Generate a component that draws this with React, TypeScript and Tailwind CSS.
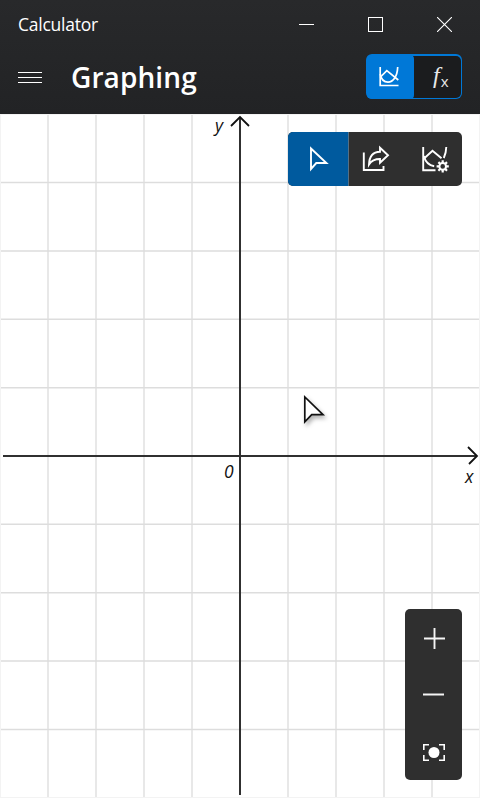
import React from "react";

const verticals = [48, 96, 144, 192, 288, 336, 384, 432];
const horizontals = [-4, -3, -2, -1, 1, 2, 3, 4].map((k) => 342 + k * 68.35);

function TitleBar() {
  return (
    <div className="flex h-[48px] items-center justify-between pl-[18px]">
      <span className="text-[17.5px] leading-6 tracking-[-0.25px]">Calculator</span>
      <div className="flex h-full items-center">
        <button aria-label="Minimize" className="flex h-full w-[69px] items-center justify-center">
          <span className="h-px w-[15px] bg-white" />
        </button>
        <button aria-label="Maximize" className="flex h-full w-[69px] items-center justify-center">
          <span className="h-[15px] w-[15px] border border-white" />
        </button>
        <button aria-label="Close" className="flex h-full w-[70px] items-center justify-center pr-[2px]">
          <svg width="15" height="15" viewBox="0 0 15 15" stroke="white" strokeWidth="1.1">
            <path d="M0 0L15 15M15 0L0 15" />
          </svg>
        </button>
      </div>
    </div>
  );
}

function ModeSwitch() {
  return (
    <div className="flex h-[45px] w-[96px] overflow-hidden rounded-[6px] bg-[#0078d7] p-[1.5px]">
      <div className="flex flex-1 rounded-[5px] bg-[#1b1c1e]">
        <button aria-label="Graph view" className="-my-px -ml-px flex w-[47.5px] items-center justify-center rounded-[4px] bg-[#0078d7] pr-[2px]">
          <svg width="20" height="20" viewBox="0 0 20 20" fill="none" stroke="white" strokeWidth="1.7">
            <path d="M1.2 0V18.5H19.5" />
            <path d="M1 10.5L7.8 3.6L19.3 13" />
            <path d="M1.2 7C2 11.5 4.5 15.2 9 15.2C14 15.2 18.3 10 18.7 0" />
          </svg>
        </button>
        <button aria-label="Equation view" className="flex flex-1 items-baseline justify-center pt-[5px] pl-[6px] text-[#e8e8e8]">
          <span className="font-['Liberation_Serif',serif] text-[24px] leading-7 italic">f</span>
          <span className="relative top-[4px] left-px text-[15px] leading-4">x</span>
        </button>
      </div>
    </div>
  );
}

function Toolbar() {
  return (
    <div className="absolute top-[18px] right-[18px] flex h-[54px] w-[174px] overflow-hidden rounded-[5px] bg-[#2f2f2f]">
      <button aria-label="Trace" className="flex w-[60px] items-center justify-center bg-[#005a9e] pl-[2px]">
        <svg width="20" height="28" viewBox="0 0 20 28" fill="none" stroke="white" strokeWidth="1.9">
          <path d="M2 3.5V24L7.3 18H17.4Z" />
        </svg>
      </button>
      <button aria-label="Share" className="flex w-[57px] items-center justify-center border-l border-[#557085] pr-[3px]">
        <svg width="28" height="28" viewBox="0 0 28 28" fill="none" stroke="white" strokeWidth="1.9">
          <path d="M1.8 7.5V25H21.5V21" />
          <path d="M18 2.8L26 10.3L18 17.8V14C13 14 9.5 15.5 7 19.5C7.3 12 11 7 18 6.8Z" />
        </svg>
      </button>
      <button aria-label="Graph options" className="flex w-[57px] items-center justify-center pl-[2px]">
        <svg width="28" height="28" viewBox="0 0 28 28" fill="none" stroke="white" strokeWidth="1.9">
          <path d="M2.2 2V25.2H14.5" />
          <path d="M2.5 14L11.5 5.7L20.5 13.2" />
          <path d="M25.3 2C25.2 6 24.4 9.5 22.8 13" />
          <path d="M2.8 11C4.5 17 8 20.5 13.2 21.3" />
          <circle cx="21.7" cy="21.4" r="3.3" strokeWidth="2" />
          <path strokeWidth="2.2" d="M21.7 15.3V18M21.7 24.8V27.5M15.6 21.4H18.3M25.1 21.4H27.8M17.4 17.1L19.3 19M24.1 23.8L26 25.7M17.4 25.7L19.3 23.8M24.1 19L26 17.1" />
        </svg>
      </button>
    </div>
  );
}

function ZoomControls() {
  return (
    <div className="absolute right-[18px] bottom-[18px] grid h-[171px] w-[57px] grid-rows-3 rounded-[5px] bg-[#2f2f2f]">
      <button aria-label="Zoom in" className="flex items-center justify-center">
        <svg width="57" height="57" viewBox="0 0 57 57" stroke="#f5f5f5" strokeWidth="1.9">
          <path d="M19 29.5H40M29.5 19V40" />
        </svg>
      </button>
      <button aria-label="Zoom out" className="flex items-center justify-center">
        <svg width="57" height="57" viewBox="0 0 57 57" stroke="#f5f5f5" strokeWidth="2">
          <path d="M18 28.5H39" />
        </svg>
      </button>
      <button aria-label="Reset view" className="flex items-center justify-center">
        <svg width="57" height="57" viewBox="0 0 57 57" fill="none" stroke="white" strokeWidth="1.6">
          <path d="M18.8 27V21.8H24M34 21.8H39.2V27M39.2 32V37.2H34M24 37.2H18.8V32" />
          <circle cx="29" cy="29.5" r="5.5" fill="white" stroke="none" />
        </svg>
      </button>
    </div>
  );
}

function Plot() {
  return (
    <svg className="block" width="480" height="684" viewBox="0 0 480 684" fill="none">
      <rect width="480" height="684" fill="white" />
      {verticals.map((x) => (
        <path key={x} d={`M${x} 1V683`} stroke="#e8e8e8" strokeWidth="2" />
      ))}
      {horizontals.map((y) => (
        <path key={y} d={`M0 ${y}H480`} stroke="#dddddd" strokeWidth="1.5" />
      ))}
      <path d="M.5 0V684M479.5 0V684M0 683.5H480M0 .5H480" stroke="#f3f3f3" />
      <path d="M240 3V681M3 342H477" stroke="#303030" strokeWidth="2" />
      <path d="M231 12L240 3L249 12M468 333L477 342L469 350" stroke="#111" strokeWidth="1.8" />
      <g className="font-['Open_Sans','Noto_Sans',sans-serif] text-[17.5px] italic" fill="#111">
        <text x="215" y="18">y</text>
        <text x="224" y="364">0</text>
        <text x="465" y="369">x</text>
      </g>
      <path className="drop-shadow-[2px_3px_2px_rgba(0,0,0,0.3)]" d="M304.8 283V307.8L311.7 300.7H323Z" fill="white" stroke="#111" strokeWidth="1.7" />
    </svg>
  );
}

export default function App() {
  return (
    <main className="h-[798px] w-[480px] overflow-hidden bg-white font-['Open_Sans','Noto_Sans',sans-serif] text-white">
      <header className="h-[114px] bg-linear-to-b from-[#28292b] to-[#222325]">
        <TitleBar />
        <div className="flex items-start justify-between pt-[6px] pr-[18px] pl-[18px]">
          <div className="flex h-[45px] items-center gap-[29px]">
            <button aria-label="Open navigation" className="mt-[2px] flex w-[24px] flex-col gap-[4px]">
              <span className="h-px w-full bg-white" />
              <span className="h-px w-full bg-white" />
              <span className="h-px w-full bg-white" />
            </button>
            <h1 className="text-[28px] leading-9 font-semibold tracking-[0.1px]">Graphing</h1>
          </div>
          <ModeSwitch />
        </div>
      </header>
      <section className="relative h-[684px]">
        <Plot />
        <Toolbar />
        <ZoomControls />
      </section>
    </main>
  );
}
